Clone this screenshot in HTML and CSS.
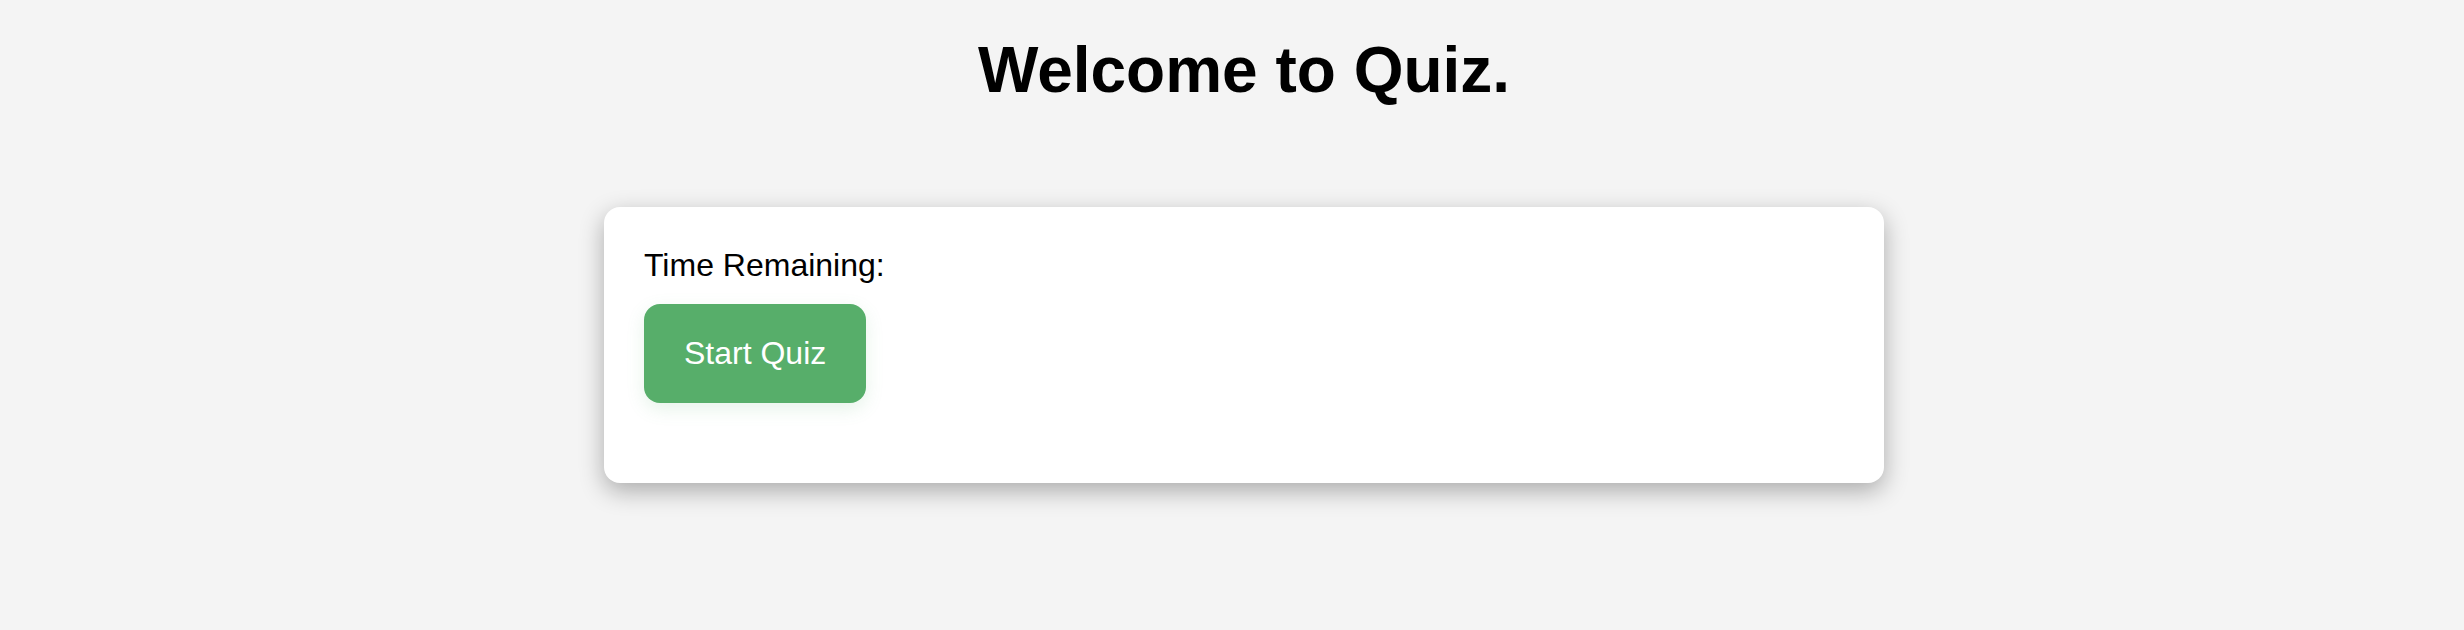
FILE: index.html
```html
<!DOCTYPE html>
<html lang="en">
<head>
<meta charset="utf-8">
<title>Quiz</title>
<link rel="stylesheet" href="styles.css">
</head>
<body>
<main class="page">
  <h1 class="title">Welcome to Quiz.</h1>
  <div class="card">
    <div class="timer">Time Remaining:</div>
    <button class="start-btn">Start Quiz</button>
  </div>
</main>
</body>
</html>
```
FILE: styles.css
```css
html, body {
  margin: 0;
  padding: 0;
}
html {
  background: #f4f4f4;
}
body {
  min-height: 100vh;
  background: #f4f4f4;
  font-family: "Liberation Sans", Arial, sans-serif;
  color: #000;
}
.page {
  padding: 34px 0 60px 24px;
}
.title {
  margin: 0;
  text-align: center;
  font-size: 64px;
  font-weight: bold;
  line-height: 72px;
}
.card {
  box-sizing: border-box;
  width: 1280px;
  margin: 101px auto 0;
  padding: 40px 40px 80px;
  background: #fff;
  border-radius: 16px;
  box-shadow: 0 8px 24px rgba(0, 0, 0, 0.3);
}
.timer {
  font-size: 32px;
  line-height: 1.15;
}
.start-btn {
  display: block;
  margin-top: 20px;
  height: 99px;
  padding: 0 40px;
  border: none;
  border-radius: 16px;
  background: #57ae6a;
  color: #fff;
  font-family: "Liberation Sans", Arial, sans-serif;
  font-size: 32px;
  box-shadow: 0 6px 18px rgba(87, 174, 106, 0.15);
}
```
